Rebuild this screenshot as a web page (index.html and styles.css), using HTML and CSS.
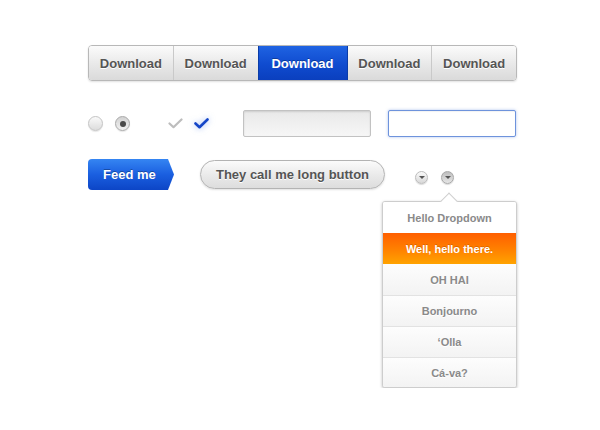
FILE: index.html
```html
<!DOCTYPE html>
<html>
<head>
<meta charset="utf-8">
<link rel="stylesheet" href="styles.css">
</head>
<body>
<div class="page">
  <div class="seg">
    <div class="seg-btn">Download</div>
    <div class="seg-btn">Download</div>
    <div class="seg-btn active">Download</div>
    <div class="seg-btn">Download</div>
    <div class="seg-btn">Download</div>
  </div>

  <div class="row2">
    <div class="radios">
      <span class="radio"></span>
      <span class="radio checked"></span>
    </div>
    <div class="checks">
      <svg class="check" width="15" height="11" viewBox="0 0 15 11"><path d="M1.5 5.5 L5.5 9.2 L13.5 1.5" fill="none" stroke="#bdbdbd" stroke-width="2.2" stroke-linecap="round" stroke-linejoin="round"/></svg>
      <svg class="check blue" width="15" height="11" viewBox="0 0 15 11"><path d="M1.5 5.5 L5.5 9.2 L13.5 1.5" fill="none" stroke="#1546c8" stroke-width="2.6" stroke-linecap="round" stroke-linejoin="round"/></svg>
    </div>
    <input class="field" type="text">
    <input class="field focus" type="text">
  </div>

  <div class="row3">
    <div class="feed">Feed me</div>
    <div class="long">They call me long button</div>
    <div class="rounds">
      <span class="round"><span class="tri"></span></span>
      <span class="round pressed"><span class="tri"></span></span>
    </div>
  </div>

  <div class="dropdown">
    <div class="dd-arrow"></div>
    <ul class="dd-list">
      <li class="dd-head">Hello Dropdown</li>
      <li class="dd-item hot">Well, hello there.</li>
      <li class="dd-item">OH HAI</li>
      <li class="dd-item">Bonjourno</li>
      <li class="dd-item">‘Olla</li>
      <li class="dd-item">Cá-va?</li>
    </ul>
  </div>
</div>
</body>
</html>
```

FILE: styles.css
```css
html, body {
  margin: 0;
  padding: 0;
  background: #fff;
}
body {
  font-family: "Liberation Sans", Arial, Helvetica, sans-serif;
  font-weight: bold;
}
.page {
  width: 429px;
  padding: 45px 0 0 88px;
  display: flex;
  flex-direction: column;
}

/* segmented control */
.seg {
  display: flex;
  height: 34px;
  border: 1px solid #b8b8b8;
  border-radius: 4px;
  box-shadow: 0 1px 2px rgba(0,0,0,0.12);
  overflow: hidden;
}
.seg-btn {
  flex: 1;
  display: flex;
  align-items: center;
  justify-content: center;
  font-size: 13px;
  color: #555;
  background: linear-gradient(#fbfbfb, #e8e8e8 55%, #dadada);
  border-left: 1px solid #c9c9c9;
  text-shadow: 0 1px 0 #fff;
}
.seg-btn:first-child { border-left: none; }
.seg-btn.active {
  flex: 0 0 88px;
  color: #fff;
  background: linear-gradient(#1f63e2, #0f4bcf 55%, #0a3fbe);
  border-left: 1px solid #0a3ca8;
  text-shadow: 0 -1px 0 rgba(0,0,0,0.3);
}
.seg-btn.active + .seg-btn { border-left: 1px solid #0a3ca8; }

/* row 2 */
.row2 {
  display: flex;
  align-items: center;
  margin-top: 29px;
  height: 27px;
}
.radios { display: flex; gap: 12px; }
.radio {
  width: 13px;
  height: 13px;
  border-radius: 50%;
  border: 1px solid #c4c4c4;
  background: linear-gradient(#fafafa, #dcdcdc);
  box-shadow: 0 1px 1px rgba(0,0,0,0.1);
  position: relative;
}
.radio.checked {
  border-color: #a9a9a9;
  background: linear-gradient(#d2d2d2, #f2f2f2);
}
.radio.checked::after {
  content: "";
  position: absolute;
  left: 3.5px;
  top: 3.5px;
  width: 6px;
  height: 6px;
  border-radius: 50%;
  background: #4a4a4a;
}
.checks {
  display: flex;
  gap: 11px;
  margin-left: 38px;
}
.check.blue { filter: drop-shadow(0 0 3px rgba(70,120,230,0.55)); }
.field {
  box-sizing: border-box;
  width: 128px;
  height: 27px;
  margin: 0 0 0 34px;
  padding: 0;
  border: 1px solid #c2c2c2;
  border-radius: 2px;
  background: linear-gradient(#e9e9e9, #f6f6f6);
  box-shadow: inset 0 1px 2px rgba(0,0,0,0.12);
  outline: none;
}
.field.focus {
  margin-left: 17px;
  background: #fff;
  border: 1px solid #6e93dc;
  box-shadow: 0 0 3px rgba(90,130,220,0.5), inset 0 1px 1px rgba(0,0,0,0.05);
}

/* row 3 */
.row3 {
  display: flex;
  align-items: center;
  margin-top: 22px;
  height: 31px;
}
.feed {
  width: 71px;
  height: 31px;
  padding-left: 15px;
  display: flex;
  align-items: center;
  font-size: 13px;
  color: #fff;
  background: linear-gradient(#3585f2, #1a5fe0 50%, #0c45c6);
  border-radius: 4px 0 0 4px;
  clip-path: polygon(0 0, 80px 0, 86px 50%, 80px 100%, 0 100%);
  text-shadow: 0 -1px 0 rgba(0,0,0,0.3);
}
.long {
  box-sizing: border-box;
  margin-left: 26px;
  width: 185px;
  height: 29px;
  border: 1px solid #b3b3b3;
  border-radius: 15px;
  display: flex;
  align-items: center;
  justify-content: center;
  font-size: 13px;
  color: #555;
  background: linear-gradient(#fbfbfb, #e9e9e9 55%, #dddddd);
  box-shadow: 0 1px 2px rgba(0,0,0,0.12);
  text-shadow: 0 1px 0 #fff;
}
.rounds {
  display: flex;
  gap: 13px;
  margin-left: 30px;
  margin-top: 5px;
}
.round {
  box-sizing: border-box;
  width: 13px;
  height: 13px;
  border-radius: 50%;
  border: 1px solid #bdbdbd;
  background: linear-gradient(#fafafa, #d8d8d8);
  box-shadow: 0 1px 1px rgba(0,0,0,0.15);
  display: flex;
  align-items: center;
  justify-content: center;
}
.round.pressed {
  width: 13px;
  height: 13px;
  border-color: #a8a8a8;
  background: linear-gradient(#bdbdbd, #e6e6e6);
}
.tri {
  width: 0;
  height: 0;
  border-left: 3px solid transparent;
  border-right: 3px solid transparent;
  border-top: 3px solid #555;
  margin-top: 1px;
}

/* dropdown popover */
.dropdown {
  position: relative;
  align-self: flex-end;
  width: 135px;
  margin-top: 11px;
}
.dd-arrow {
  position: absolute;
  top: -6px;
  left: 61px;
  width: 11px;
  height: 11px;
  background: #fff;
  border-left: 1px solid #cfcfcf;
  border-top: 1px solid #cfcfcf;
  transform: rotate(45deg);
  z-index: 2;
}
.dd-list {
  list-style: none;
  margin: 0;
  padding: 0;
  box-sizing: border-box;
  border: 1px solid #cdcdcd;
  border-radius: 3px;
  overflow: hidden;
  background: #fff;
  box-shadow: 0 1px 3px rgba(0,0,0,0.25);
}
.dd-list li {
  height: 31px;
  display: flex;
  align-items: center;
  justify-content: center;
  font-size: 11px;
  color: #8a8a8a;
}
.dd-head {
  background: #fff;
}
.dd-item {
  border-top: 1px solid #e2e2e2;
  box-sizing: border-box;
  background: linear-gradient(#fdfdfd, #f3f3f3);
  text-shadow: 0 1px 0 #fff;
}
.dd-list li:last-child { height: 30px; }
.dd-item.hot {
  border-top: none;
  color: #fff;
  background: linear-gradient(#ff5f00, #ff8200 55%, #ffa300);
  text-shadow: 0 -1px 0 rgba(150,60,0,0.35);
}
.dd-item.hot + .dd-item { border-top: none; }
```
